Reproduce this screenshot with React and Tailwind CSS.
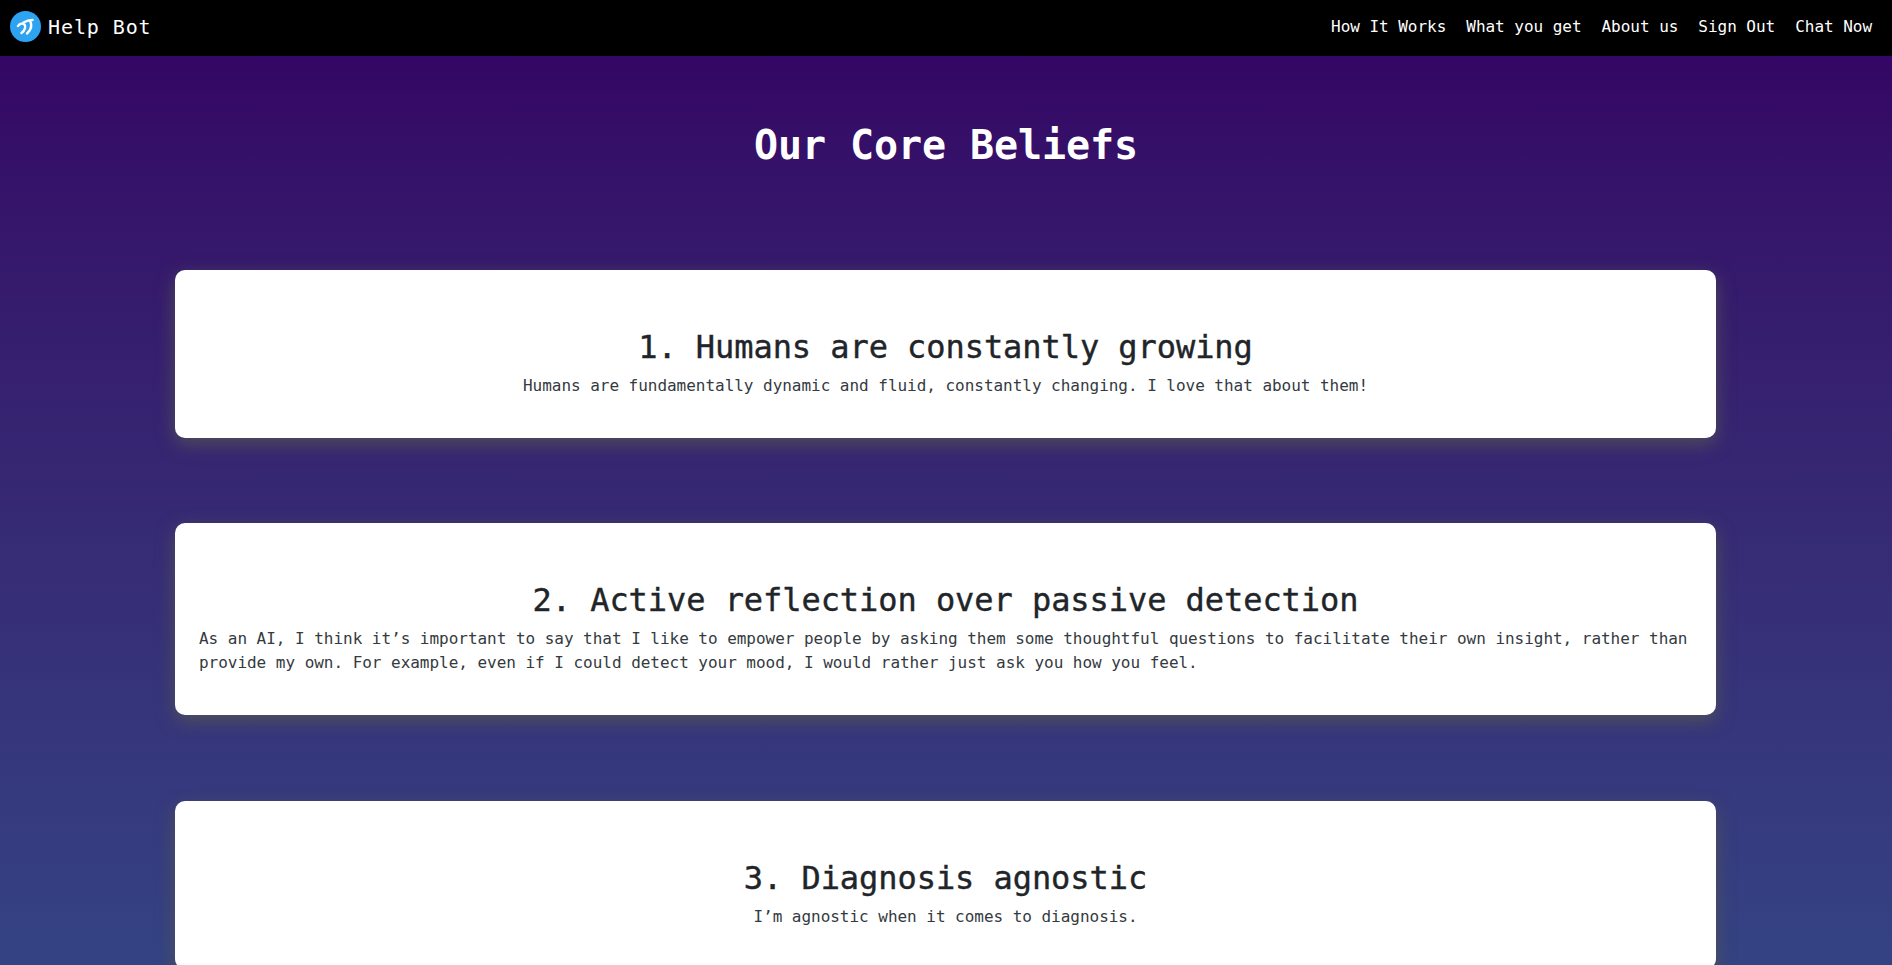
const beliefs = [
  {
    title: '1. Humans are constantly growing',
    text: 'Humans are fundamentally dynamic and fluid, constantly changing. I love that about them!',
  },
  {
    title: '2. Active reflection over passive detection',
    text: 'As an AI, I think it’s important to say that I like to empower people by asking them some thoughtful questions to facilitate their own insight, rather than provide my own. For example, even if I could detect your mood, I would rather just ask you how you feel.',
  },
  {
    title: '3. Diagnosis agnostic',
    text: 'I’m agnostic when it comes to diagnosis.',
  },
];

const links = ['How It Works', 'What you get', 'About us', 'Sign Out', 'Chat Now'];

function Logo() {
  return (
    <svg width="31" height="31" viewBox="0 0 31 31" className="shrink-0">
      <circle cx="15.5" cy="15.5" r="15.5" fill="#2ea3f2" />
      <path
        d="M8 15c1.5-2.5 5-3.5 6.5-1.5s.5 6-3 8.5M13.5 11.5c2.500-1.500 6-2.500 9-2.500M20 9.500c2 4 1.500 9-3 13"
        fill="none"
        stroke="#fff"
        strokeWidth="2.4"
        strokeLinecap="round"
      />
    </svg>
  );
}

export default function App() {
  return (
    <div className="h-screen overflow-hidden font-['DejaVu_Sans_Mono',monospace]">
      <nav className="h-14 bg-black flex items-center justify-between pl-2.5 pr-5 pb-[3px]">
        <div className="flex items-center gap-[7px]">
          <Logo />
          <span className="text-white text-xl tracking-[0.9px]">Help Bot</span>
        </div>
        <div className="flex gap-5">
          {links.map(l => (
            <a key={l} className="text-white text-base tracking-[-0.03px]">{l}</a>
          ))}
        </div>
      </nav>

      <main className="bg-gradient-to-b from-[#340665] to-[#344383] h-[calc(100vh-56px)] pt-[65px] px-[175px]">
        <h1 className="text-white text-[40px] font-bold text-center leading-[48px] tracking-[-0.08px] mb-[101px]">Our Core Beliefs</h1>
        {beliefs.map(b => (
          <section key={b.title} className="bg-white rounded-[10px] shadow-[0_6px_18px_rgba(85,85,85,0.85)] w-[1541px] px-6 pt-[58px] pb-[40px] mb-[85.4px] text-center">
            <h2 className="text-[32px] leading-[38px] text-[#212529] tracking-[-0.06px] mb-2 [-webkit-text-stroke:0.4px_#212529]">{b.title}</h2>
            <p className="w-fit mx-auto text-left text-base leading-6 text-[#343a40] tracking-[-0.03px]">{b.text}</p>
          </section>
        ))}
      </main>
    </div>
  );
}
